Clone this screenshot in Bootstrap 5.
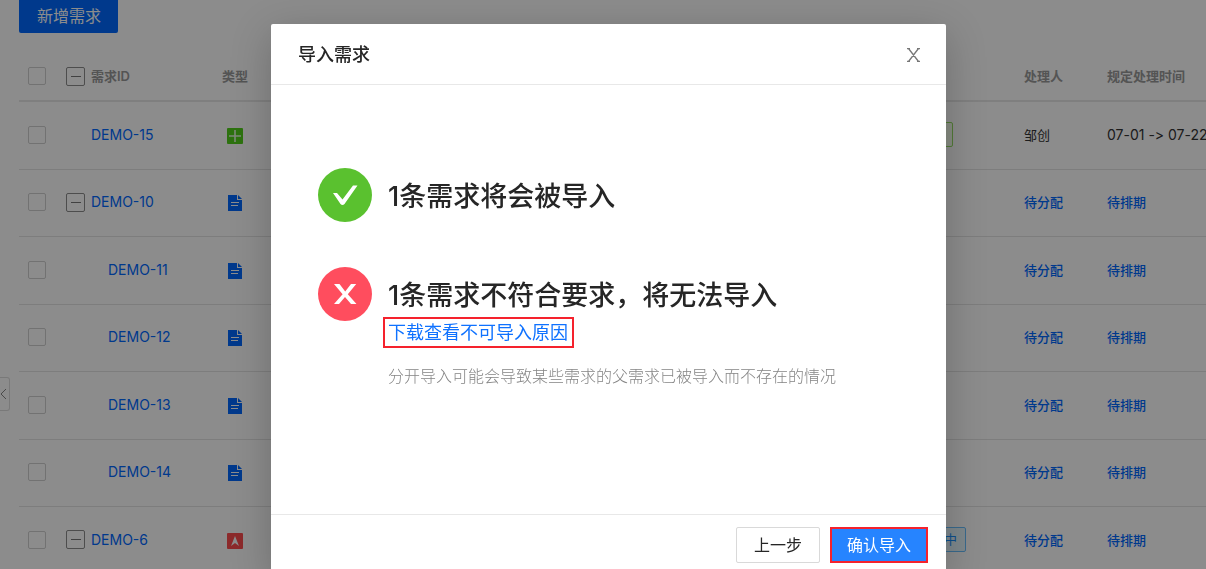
<!DOCTYPE html>
<html lang="zh-CN">
<head>
<meta charset="utf-8">
<meta name="viewport" content="width=device-width, initial-scale=1">
<title>导入需求</title>
<link href="https://cdn.jsdelivr.net/npm/bootstrap@5.3.0/dist/css/bootstrap.min.css" rel="stylesheet">
<style>
  :root { --brand: #0069ff; --line: #e8e8e8; }
  body { font-family: Inter, "Noto Sans CJK SC", sans-serif; font-size: 14px; color: #333; }
  a { color: var(--brand); text-decoration: none; }
  .page-area { padding-left: 19px; }
  .add-btn { height: 33px; padding: 0 17px 2px 18px; font-size: 16px; line-height: 30px; border-radius: 0 0 2px 2px; background: var(--brand); color: #fff; }

  .req-table { table-layout: fixed; margin-top: 20px; font-size: 13px; line-height: 20px; white-space: nowrap; color: #333; }
  .req-table th, .req-table td { padding: 0 0 1px; vertical-align: middle; }
  .req-table thead tr { height: 48px; border-bottom: 2px solid var(--line); }
  .req-table th { font-weight: 600; color: #999; }
  .req-table tbody tr { height: 68px; border-bottom: 1px solid #e4e4e4; }
  .req-table tbody tr:nth-child(even) { height: 67px; }
  .req-table .pick { width: 47px; padding-left: 9px; }
  .req-table td a { font-weight: 500; }
  .col-id { width: 140px; }
  .col-kind { width: 58px; }
  .col-state { width: 89px; }
  .col-owner { width: 83px; }
  .col-time { width: 99px; }
  .req-table .form-check-input { display: block; width: 18px; height: 18px; margin: 0; border: 1px solid #cfcfcf; border-radius: 2px; }
  .req-table .id-cell { padding-left: 25px; font-size: 14px; }
  .req-table .id-cell a { font-weight: 400; }
  .req-table .id-cell.sub { padding-left: 42px; }
  .req-table .id-cell.open { padding-left: 0; }
  .fold-row { gap: 6px; }
  .fold { width: 19px; height: 19px; padding: 0; border: 1px solid #8c8c8c; border-radius: 2px; background: none; }
  .fold::before { content: ""; width: 10px; height: 1px; background: #777; }
  .req-table .time-range { font-size: 14px; font-variant-ligatures: none; font-feature-settings: "calt" 0; }
  .kind { display: inline-block; width: 16px; height: 16px; vertical-align: middle; }
  .state-tag { display: inline-block; height: 25px; min-width: 17px; padding: 0 8px; border: 1px solid; border-radius: 2px; line-height: 22px; vertical-align: middle; }
  .tag-done { border-color: #95de64; background: #f6ffed; }
  .tag-doing { color: #1890ff; border-color: #69c0ff; background: #e6f7ff; }
  .side-tab { top: 377px; left: 0; width: 10px; height: 34px; padding: 0; border: 1px solid #ddd; border-left: 0; border-radius: 0 3px 3px 0; background: #fff; }
  .side-tab svg { display: block; }

  .modal-backdrop.show { opacity: .45; }
  .modal { padding-left: 11px; }
  .modal-dialog { max-width: 675px; margin: 24px auto; }
  .modal-content { border: 0; border-radius: 2px; box-shadow: 0 10px 40px rgba(0, 0, 0, .22); color: #262626; }
  .modal-header { padding: 2px 26px 0 27px; height: 61px; border-color: var(--line); border-radius: 0; }
  .modal-title { font-size: 18px; line-height: 24px; font-weight: 500; }
  .close-x { padding: 0; border: 0; background: none; }
  .modal-body { padding: 83px 47px 126px; gap: 45px; }
  .result { gap: 16px; }
  .result h2 { margin: 9px 0 1px; font-size: 27px; line-height: 40px; font-weight: 500; }
  .reason-link { display: inline-block; margin-left: -5px; padding: 0 4px 0 3px; border: 2px solid #f5222d; font-size: 18px; line-height: 27px; color: #0f72ff; }
  .hint { margin: 16px 0 0; font-size: 16px; line-height: 24px; font-weight: 300; color: #858585; }
  .modal-footer { padding: 12px 18px; gap: 10px; border-color: var(--line); }
  .modal-footer > .btn { margin: 0; height: 36px; padding: 0 17px; font-size: 16px; line-height: 32px; border-radius: 2px; }
  .modal-footer > .btn-back { border-color: #d9d9d9; color: #262626; }
  .modal-footer > .btn-confirm { padding: 0 15px; border: 2px solid #f5222d; border-radius: 0; background: #2684ff; color: #fff; }
</style>
</head>
<body class="overflow-hidden">
<svg class="d-none">
  <symbol id="k-plus" viewBox="0 0 16 16"><rect width="16" height="16" rx="1" fill="#52d01c"/><path d="M8 2v12M2 8h12" stroke="#fff" stroke-opacity=".85" stroke-width="1.600"/></symbol>
  <symbol id="k-doc" viewBox="0 0 16 16"><path d="M1 0h9v5h5v11H1z" fill="#0069ff"/><path d="M11 0l4 4h-4z" fill="#0069ff"/><path d="M4 7.500h8M4 10.500h7" stroke="#fff"/></symbol>
  <symbol id="k-epic" viewBox="0 0 16 16"><rect width="16" height="16" rx="1" fill="#ff4d4f"/><path d="M8 3l4 10-4-3-4 3z" fill="#fff"/></symbol>
</svg>

<main class="page-area">
  <button type="button" class="btn add-btn border-0">新增需求</button>
  <table class="table table-borderless req-table mb-0">
    <thead>
      <tr>
        <th class="pick"><input class="form-check-input" type="checkbox" aria-label="全选"></th>
        <th class="col-id"><div class="fold-row d-flex align-items-center"><button type="button" class="fold d-flex align-items-center justify-content-center" aria-label="全部收起"></button>需求ID</div></th>
        <th class="col-kind text-center">类型</th>
        <th></th>
        <th class="col-state"></th>
        <th class="col-owner">处理人</th>
        <th class="col-time">规定处理时间</th>
      </tr>
    </thead>
    <tbody>
      <tr>
        <td class="pick"><input class="form-check-input" type="checkbox" aria-label="DEMO-15"></td>
        <td><div class="id-cell"><a href="#">DEMO-15</a></div></td>
        <td class="text-center"><svg class="kind"><use href="#k-plus"/></svg></td>
        <td></td><td><span class="state-tag tag-done"></span></td>
        <td>邹创</td><td class="time-range">07-01 -&gt; 07-22</td>
      </tr>
      <tr>
        <td class="pick"><input class="form-check-input" type="checkbox" aria-label="DEMO-10"></td>
        <td><div class="id-cell open fold-row d-flex align-items-center"><button type="button" class="fold d-flex align-items-center justify-content-center" aria-label="收起"></button><a href="#">DEMO-10</a></div></td>
        <td class="text-center"><svg class="kind"><use href="#k-doc"/></svg></td>
        <td></td><td></td>
        <td><a href="#">待分配</a></td><td><a href="#">待排期</a></td>
      </tr>
      <tr>
        <td class="pick"><input class="form-check-input" type="checkbox" aria-label="DEMO-11"></td>
        <td><div class="id-cell sub"><a href="#">DEMO-11</a></div></td>
        <td class="text-center"><svg class="kind"><use href="#k-doc"/></svg></td>
        <td></td><td></td>
        <td><a href="#">待分配</a></td><td><a href="#">待排期</a></td>
      </tr>
      <tr>
        <td class="pick"><input class="form-check-input" type="checkbox" aria-label="DEMO-12"></td>
        <td><div class="id-cell sub"><a href="#">DEMO-12</a></div></td>
        <td class="text-center"><svg class="kind"><use href="#k-doc"/></svg></td>
        <td></td><td></td>
        <td><a href="#">待分配</a></td><td><a href="#">待排期</a></td>
      </tr>
      <tr>
        <td class="pick"><input class="form-check-input" type="checkbox" aria-label="DEMO-13"></td>
        <td><div class="id-cell sub"><a href="#">DEMO-13</a></div></td>
        <td class="text-center"><svg class="kind"><use href="#k-doc"/></svg></td>
        <td></td><td></td>
        <td><a href="#">待分配</a></td><td><a href="#">待排期</a></td>
      </tr>
      <tr>
        <td class="pick"><input class="form-check-input" type="checkbox" aria-label="DEMO-14"></td>
        <td><div class="id-cell sub"><a href="#">DEMO-14</a></div></td>
        <td class="text-center"><svg class="kind"><use href="#k-doc"/></svg></td>
        <td></td><td></td>
        <td><a href="#">待分配</a></td><td><a href="#">待排期</a></td>
      </tr>
      <tr>
        <td class="pick"><input class="form-check-input" type="checkbox" aria-label="DEMO-6"></td>
        <td><div class="id-cell open fold-row d-flex align-items-center"><button type="button" class="fold d-flex align-items-center justify-content-center" aria-label="收起"></button><a href="#">DEMO-6</a></div></td>
        <td class="text-center"><svg class="kind"><use href="#k-epic"/></svg></td>
        <td></td><td><span class="state-tag tag-doing">中</span></td>
        <td><a href="#">待分配</a></td><td><a href="#">待排期</a></td>
      </tr>
    </tbody>
  </table>
</main>
<button type="button" class="side-tab position-absolute" aria-label="收起侧栏"><svg width="7" height="12" fill="none" stroke="#888"><path d="M6 1L1 6l5 5"/></svg></button>

<div class="modal-backdrop show"></div>
<div class="modal show d-block overflow-hidden" role="dialog" aria-labelledby="dlg-title">
  <div class="modal-dialog">
    <div class="modal-content">
      <div class="modal-header">
        <h1 class="modal-title" id="dlg-title">导入需求</h1>
        <button type="button" class="close-x" aria-label="关闭"><svg class="d-block" width="13" height="14" fill="none" stroke="#777" stroke-width="1.3"><path d="M1.500 .5l10 13M11.500 .5l-10 13M0 .7h3M10 .7h3M0 13.300h3M10 13.300h3"/></svg></button>
      </div>
      <div class="modal-body d-flex flex-column">
        <section class="result d-flex align-items-start">
          <svg class="flex-shrink-0" width="54" height="54"><circle cx="27" cy="27" r="27" fill="#5ac12f"/><path d="M15 25h4l5.500 6.500L35 17.500h4.500L26.500 36q-2 2-4 0z" fill="#fff"/></svg>
          <h2>1条需求将会被导入</h2>
        </section>
        <section class="result d-flex align-items-start">
          <svg class="flex-shrink-0" width="54" height="54"><circle cx="27" cy="27" r="27" fill="#ff4d5e"/><path d="M16 17h5.500l5.700 7.500L33 17h5.200l-8.400 10.300L38.500 37H33l-6-7-6 7h-5l8.600-9.700z" fill="#fff"/></svg>
          <div>
            <h2>1条需求不符合要求，将无法导入</h2>
            <a class="reason-link align-top" href="#">下载查看不可导入原因</a>
            <p class="hint">分开导入可能会导致某些需求的父需求已被导入而不存在的情况</p>
          </div>
        </section>
      </div>
      <div class="modal-footer">
        <button type="button" class="btn btn-back">上一步</button>
        <button type="button" class="btn btn-confirm">确认导入</button>
      </div>
    </div>
  </div>
</div>
<script src="https://cdn.jsdelivr.net/npm/bootstrap@5.3.0/dist/js/bootstrap.bundle.min.js"></script>
</body>
</html>
